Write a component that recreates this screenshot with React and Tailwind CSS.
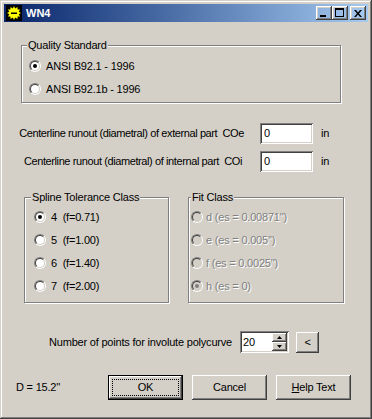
import React from 'react';

const raised = 'shadow-[inset_-1px_-1px_#404040,inset_1px_1px_#ffffff,inset_-2px_-2px_#808080,inset_2px_2px_#d4d0c8]';
const sunken = 'shadow-[inset_1px_1px_#808080,inset_-1px_-1px_#ffffff,inset_2px_2px_#404040,inset_-2px_-2px_#d4d0c8]';

function Radio({ checked, disabled, label, textGap }) {
  return (
    <div className="flex items-center h-[12px]">
      <span className="w-[12px] h-[12px] shrink-0 rounded-full border border-t-[#808080] border-l-[#808080] border-b-white border-r-white flex">
        <span
          className={`w-[10px] h-[10px] rounded-full border border-t-[#404040] border-l-[#404040] border-b-[#d4d0c8] border-r-[#d4d0c8] flex items-center justify-center ${
            disabled ? 'bg-[#d4d0c8]' : 'bg-white'
          }`}
        >
          {checked && <span className={`w-[4px] h-[4px] rounded-full ${disabled ? 'bg-[#808080]' : 'bg-black'}`} />}
        </span>
      </span>
      <span
        className={`${textGap} whitespace-pre leading-[13px] ${
          disabled ? 'text-[#808080] [text-shadow:1px_1px_#ffffff]' : 'text-black'
        }`}
      >
        {label}
      </span>
    </div>
  );
}

function Group({ title, titleLeft, className, children }) {
  return (
    <div className={`relative border border-[#808080] shadow-[inset_1px_1px_#ffffff,1px_1px_#ffffff] ${className}`}>
      <span className={`absolute -top-[7px] ${titleLeft} bg-[#d4d0c8] px-[1px] leading-[13px]`}>{title}</span>
      {children}
    </div>
  );
}

function Button({ children, isDefault }) {
  if (isDefault) {
    return (
      <div className="w-[75px] h-[25px] border border-black">
        <div className={`w-full h-full ${raised} p-[3px]`}>
          <div className="w-full h-full border border-dotted border-black flex items-center justify-center">
            {children}
          </div>
        </div>
      </div>
    );
  }
  return (
    <div className={`w-[75px] h-[25px] ${raised} flex items-center justify-center`}>{children}</div>
  );
}

function SunIcon() {
  return (
    <svg width="16" height="16" viewBox="0 0 16 16">
      <rect width="16" height="16" fill="#000" />
      <polygon
        fill="#ffff00"
        points="8,1 9.2,3.4 11.5,2 11.6,4.5 14.1,4.5 12.7,6.7 15,8 12.7,9.3 14.1,11.5 11.6,11.5 11.5,14 9.2,12.6 8,15 6.8,12.6 4.5,14 4.4,11.5 1.9,11.5 3.3,9.3 1,8 3.3,6.7 1.9,4.5 4.4,4.5 4.5,2 6.8,3.4"
      />
      <circle cx="8" cy="8" r="4.2" fill="#ffff00" />
      <rect x="5" y="7.5" width="6" height="1.5" fill="#000" />
    </svg>
  );
}

export default function App() {
  return (
    <div className="w-[372px] h-[419px] bg-[#d4d0c8] p-[4px] shadow-[inset_-1px_-1px_#404040,inset_1px_1px_#d4d0c8,inset_-2px_-2px_#808080,inset_2px_2px_#ffffff] font-['Liberation_Sans',Arial,sans-serif] text-[11px] tracking-[-0.2px] text-black overflow-hidden">
      <div className="h-[18px] bg-linear-to-r from-[#0a246a] to-[#a6caf0] flex items-center pl-[2px] pr-[2px]">
        <SunIcon />
        <span className="ml-[4px] text-white font-bold tracking-normal">WN4</span>
        <div className="ml-auto flex items-center">
          <div className={`w-[16px] h-[14px] ${raised} relative`}>
            <span className="absolute left-[4px] top-[9px] w-[6px] h-[2px] bg-black" />
          </div>
          <div className={`w-[16px] h-[14px] ${raised} relative`}>
            <span className="absolute left-[3px] top-[2px] w-[9px] h-[9px] border border-black border-t-2" />
          </div>
          <div className={`ml-[2px] w-[16px] h-[14px] ${raised} flex items-center justify-center`}>
            <svg width="8" height="7" viewBox="0 0 8 7">
              <path d="M0 0h2l2 2.5 2-2.5h2l-3 3.5 3 3.5h-2l-2-2.5-2 2.5h-2l3-3.5z" fill="#000" />
            </svg>
          </div>
        </div>
      </div>

      <div className="flex flex-col">
        <Group title="Quality Standard" titleLeft="left-[5px]" className="ml-[17px] mt-[23px] w-[320px] h-[58px]">
          <div className="flex flex-col gap-[11px] pt-[14px] pl-[7px]">
            <Radio checked label="ANSI B92.1 - 1996" textGap="ml-[5px]" />
            <Radio label="ANSI B92.1b - 1996" textGap="ml-[5px]" />
          </div>
        </Group>

        <div className="mt-[20px] h-[21px] flex items-center">
          <div className="ml-[15px] w-[225px] text-right whitespace-pre tracking-[-0.4px]">
            Centerline runout (diametral) of external part  COe
          </div>
          <div className={`ml-[16px] w-[53px] h-[21px] bg-white ${sunken} flex items-center pl-[4px]`}>0</div>
          <span className="ml-[8px]">in</span>
        </div>
        <div className="mt-[7px] h-[21px] flex items-center">
          <div className="ml-[15px] w-[223px] text-right whitespace-pre tracking-[-0.4px]">
            Centerline runout (diametral) of internal part  COi
          </div>
          <div className={`ml-[18px] w-[53px] h-[21px] bg-white ${sunken} flex items-center pl-[4px]`}>0</div>
          <span className="ml-[8px]">in</span>
        </div>

        <div className="mt-[25px] flex">
          <Group title="Spline Tolerance Class" titleLeft="left-[6px]" className="ml-[20px] w-[145px] h-[106px]">
            <div className="flex flex-col gap-[11px] pt-[13px] pl-[9px]">
              <Radio checked label="4  (f=0.71)" textGap="ml-[5px]" />
              <Radio label="5  (f=1.00)" textGap="ml-[5px]" />
              <Radio label="6  (f=1.40)" textGap="ml-[5px]" />
              <Radio label="7  (f=2.00)" textGap="ml-[5px]" />
            </div>
          </Group>
          <Group title="Fit Class" titleLeft="left-[2px]" className="ml-[19px] w-[156px] h-[106px]">
            <div className="flex flex-col gap-[11px] pt-[13px] pl-[2px]">
              <Radio disabled label="d (es = 0.00871'')" textGap="ml-[3px]" />
              <Radio disabled label="e (es = 0.005'')" textGap="ml-[3px]" />
              <Radio disabled label="f (es = 0.0025'')" textGap="ml-[3px]" />
              <Radio disabled checked label="h (es = 0)" textGap="ml-[3px]" />
            </div>
          </Group>
        </div>

        <div className="mt-[28px] h-[22px] flex items-center">
          <div className="ml-[40px] w-[188px] text-right">Number of points for involute polycurve</div>
          <div className={`ml-[8px] w-[49px] h-[22px] bg-white ${sunken} flex items-center pl-[3px] pr-[2px]`}>
            <span>20</span>
            <div className="ml-auto flex flex-col">
              <div className={`w-[15px] h-[9px] bg-[#d4d0c8] ${raised} flex items-center justify-center`}>
                <svg width="5" height="3" viewBox="0 0 5 3"><path d="M2.5 0L5 3H0z" fill="#000" /></svg>
              </div>
              <div className={`w-[15px] h-[9px] bg-[#d4d0c8] ${raised} flex items-center justify-center`}>
                <svg width="5" height="3" viewBox="0 0 5 3"><path d="M0 0h5L2.5 3z" fill="#000" /></svg>
              </div>
            </div>
          </div>
          <div className={`ml-[7px] w-[23px] h-[21px] ${raised} flex items-center justify-center`}>&lt;</div>
        </div>

        <div className="mt-[22px] h-[25px] flex items-center">
          <div className="ml-[12px] w-[92px]">D = 15.2''</div>
          <div className="flex gap-[9px]">
            <Button isDefault>OK</Button>
            <Button>Cancel</Button>
            <Button>
              <span>
                <span className="underline">H</span>elp Text
              </span>
            </Button>
          </div>
        </div>
      </div>
    </div>
  );
}
